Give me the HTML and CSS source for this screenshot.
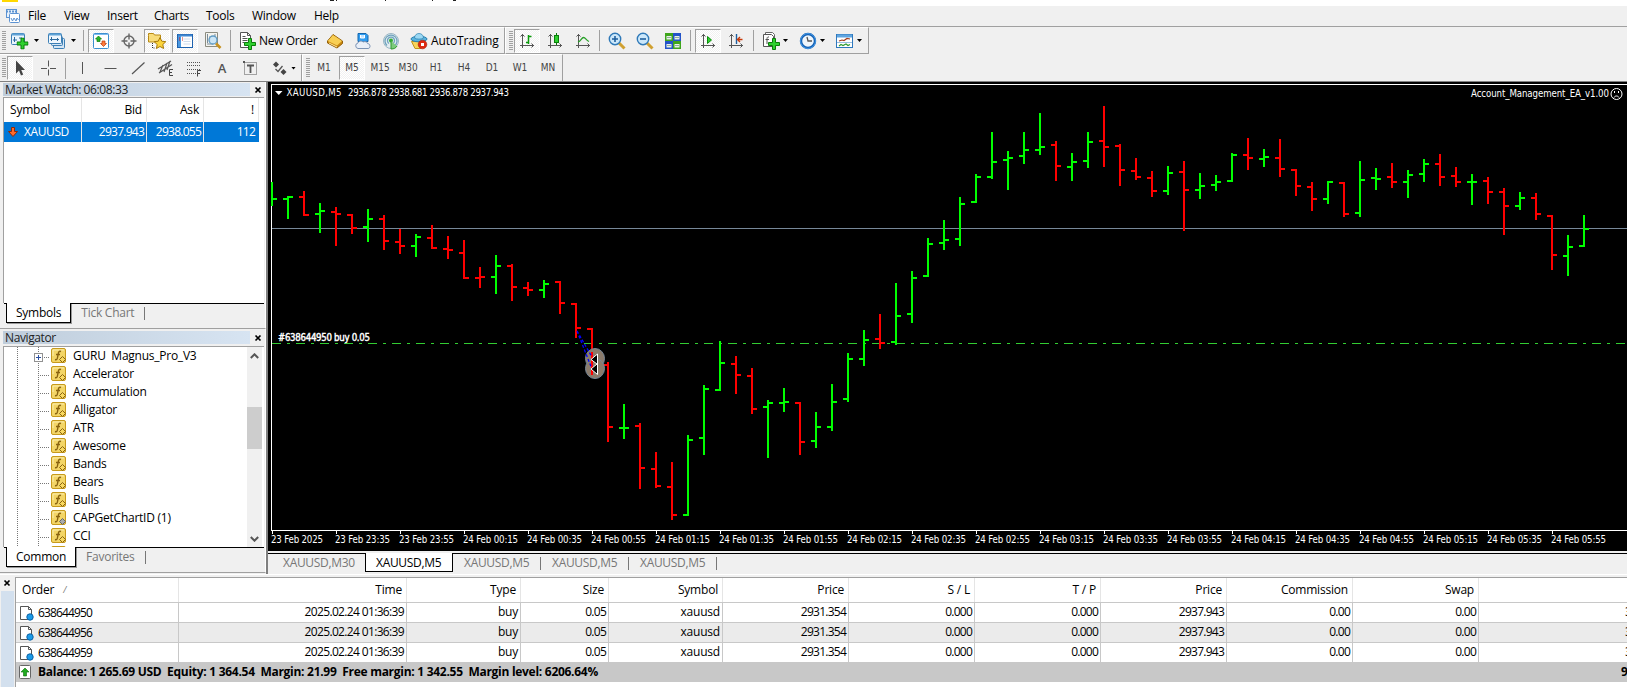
FILE: index.html
```html
<!DOCTYPE html>
<html lang="en">

<head>
  <meta charset="UTF-8" />
  <meta name="viewport" content="width=device-width, initial-scale=1.0" />
  <title>Trading Terminal</title>
  <link rel="stylesheet" href="styles.css">
</head>

<body>
  <svg class="defs" width="0" height="0">
    <symbol id="plus" viewBox="0 0 12 12">
      <path d="M4.5 .5h3v4h4v3h-4v4h-3v-4h-4v-3h4z" fill="#2fd02f" stroke="#0a7d0a" />
    </symbol>
    <symbol id="axes" viewBox="0 0 18 18">
      <path d="M4.500 2v14M2 13.500h14M2.500 4.500l2-2 2 2M13.500 11.500l2 2-2 2" fill="none" stroke="#555" />
    </symbol>
    <symbol id="fx" viewBox="0 0 16 16">
      <rect x=".5" y=".5" width="14" height="14" rx="1.500" fill="#f3d566" stroke="#c79a1c" />
      <path d="M2 8V2h11" fill="none" stroke="#fbeeb0" />
      <path d="M10 3.500c-2-.8-2.500.5-2.800 2.500L6.500 9.500C6.200 11.500 5.500 12 4 11.500M5 6.500h4" fill="none" stroke="#8a6410" stroke-width="1.400" />
    </symbol>
    <symbol id="doc" viewBox="0 0 15 16">
      <path d="M1.500 1.500h8l3 3v10h-11z" fill="#fff" stroke="#555" />
      <path d="M9.500 1.500v3h3" fill="none" stroke="#555" />
      <circle cx="11" cy="12" r="3.200" fill="#1c9be8" stroke="#0d62a5" />
    </symbol>
    <symbol id="cross" viewBox="0 0 8 8">
      <path d="M1.500 1.500l5 5M6.500 1.500l-5 5" stroke="#000" stroke-width="1.700" />
    </symbol>
  </svg>

  <div class="app">
    <div class="titlebar">
      <span class="app-mark"></span>
      <svg class="title-tail" width="140" height="2" viewBox="328 0 140 2">
        <path d="M330 .5h4M336 .5h1M385.500 0v1M432.500 0v1M453 .5h3" stroke="#222" />
      </svg>
    </div>

    <div class="menubar">
      <svg class="menu-logo" width="16" height="15" viewBox="0 0 16 15">
        <rect x="1.500" y=".5" width="10" height="8" fill="#e7f1fb" stroke="#5d93d2" />
        <path d="M1 2.500h11" stroke="#5d93d2" stroke-width="2" stroke-dasharray="2 1" />
        <rect x="4.500" y="4.500" width="10" height="9" rx="1" fill="#fff" stroke="#5d93d2" />
        <path d="M6 9l1.500 3L9 9l2 3 1-3 1.500 2" fill="none" stroke="#5d93d2" />
      </svg>
      <span class="m-file">File</span><span class="m-view">View</span><span class="m-insert">Insert</span><span class="m-charts">Charts</span><span class="m-tools">Tools</span><span class="m-window">Window</span><span class="m-help">Help</span>
    </div>

    <div class="toolbar-row">
      <div class="toolbar">
        <i class="grip"></i>
        <div class="btn drop">
          <svg width="18" height="18" viewBox="0 0 18 18"><rect x=".5" y="1.500" width="13" height="11" rx="1" fill="#e9f4fd" stroke="#3c7fb5" /><path d="M1 2.500h12" stroke="#5fa3d6" stroke-width="2" /><path d="M3.500 5v5M2 8h4M8 6h3" stroke="#2d6b9f" /><use href="#plus" x="5.500" y="5.500" width="12" height="12" /></svg>
          <i class="arrow"></i>
        </div>
        <div class="btn drop">
          <svg width="18" height="18" viewBox="0 0 18 18"><rect x="5.500" y="6.500" width="11" height="10" rx="1" fill="#d5e6f5" stroke="#3c7fb5" /><rect x="3.500" y="4.500" width="11" height="9" rx="1" fill="#d5e6f5" stroke="#3c7fb5" /><rect x=".5" y="1.500" width="13" height="10" rx="1" fill="#eef6fd" stroke="#3c7fb5" /><path d="M1 2.500h12" stroke="#5fa3d6" stroke-width="2" /><path d="M3.500 5v4M2 7.500h9M9.500 6v3" stroke="#2d6b9f" /></svg>
          <i class="arrow"></i>
        </div>
        <i class="sep"></i>
        <div class="btn on">
          <svg width="18" height="18" viewBox="0 0 18 18"><rect x="1.500" y="1.500" width="15" height="15" rx="1" fill="#fff" stroke="#3c8fd0" /><path d="M2 2.500h14" stroke="#7dbcf0" /><path d="M3.500 7l3-3 3 3H8v2.500H5V7z" fill="#28b428" stroke="#0a7d0a" stroke-width=".7" /><path d="M8.500 11.500l3 3 3-3H13V9h-3v2.500z" fill="#ff7a3c" stroke="#b83a0a" stroke-width=".7" /></svg>
        </div>
        <div class="btn">
          <svg width="18" height="18" viewBox="0 0 18 18"><circle cx="9" cy="9" r="5" fill="none" stroke="#666" stroke-width="1.400" /><path d="M9 1.500v6M9 10.500v6M1.500 9h6M10.500 9h6" stroke="#666" stroke-width="1.400" /></svg>
        </div>
        <div class="btn on">
          <svg width="18" height="18" viewBox="0 0 18 18"><path d="M.5 3.500v-2h5l1 1.500h6v7H.5z" fill="#f8dc7a" stroke="#b98a14" /><path d="M4.500 11v5h3" fill="none" stroke="#333" stroke-dasharray="1 1" /><path d="M12 5.500l1.800 3.700 4 .5-3 2.800.8 4-3.600-2-3.600 2 .8-4-3-2.800 4-.5z" fill="#fbd43c" stroke="#a87908" /></svg>
        </div>
        <div class="btn on">
          <svg width="18" height="18" viewBox="0 0 18 18"><rect x="1.500" y="2.500" width="15" height="13" fill="#fff" stroke="#1f62ae" /><path d="M2 3.500h14" stroke="#3f86d0" stroke-width="2" /><rect x="2" y="4" width="3" height="11" fill="#4a98e0" /><path d="M7.500 7h7M7.500 9.500h7M7.500 12h7" stroke="#cfdcec" /><path d="M3 6h1M3 8h1M6 6h1M6 8h1" stroke="#c22" /></svg>
        </div>
        <div class="btn">
          <svg width="18" height="18" viewBox="0 0 18 18"><path d="M1.500.5h12v14h-12z" fill="#f3f3ee" stroke="#8c8c80" /><path d="M3.500 2v9M6 4v6M11 2v4M3 12h6" stroke="#7b8b98" /><circle cx="9" cy="8" r="4" fill="#c7e3f6" fill-opacity=".9" stroke="#5f9bc4" stroke-width="1.300" /><path d="M12 11.500l4.500 4.500" stroke="#c79220" stroke-width="2.600" /></svg>
        </div>
        <i class="sep"></i>
        <div class="btn wide-order">
          <svg width="18" height="18" viewBox="0 0 18 18"><path d="M2.500.5h7l3 3v12h-10z" fill="#fff" stroke="#555" /><path d="M9.500.5v3h3M4.500 4.500h3M4.500 6.500h5M4.500 8.500h5M4.500 10.500h2" fill="none" stroke="#555" /><use href="#plus" x="6" y="6" width="12" height="12" /></svg>
          <span>New Order</span>
        </div>
        <div class="btn">
          <svg width="18" height="18" viewBox="0 0 18 18"><path d="M1.500 9L7 2.500 16.500 9v2.500L11 16 1.500 11z" fill="#c8870f" stroke="#93600a" /><path d="M1.800 9L7 3l9 6-5 4.500z" fill="#f8cf55" /><path d="M3 11l8 4" stroke="#ffe9a0" /></svg>
        </div>
        <div class="btn">
          <svg width="18" height="18" viewBox="0 0 18 18"><path d="M4 1.500h8l2 2v6H4z" fill="#2f9cf0" stroke="#1466ad" /><path d="M6.500 3v3h4V3" fill="#bfe2ff" stroke="#fff" /><path d="M4 16.500a2.800 2.800 0 010-5.500c.8-2 3.500-2.800 5-1 2.500-1 4.500 0 4.500 1.500 3 0 3.500 5 .5 5z" fill="#e9eff8" stroke="#7b93b5" /></svg>
        </div>
        <div class="btn">
          <svg width="18" height="18" viewBox="0 0 18 18"><circle cx="9" cy="9" r="7.500" fill="#e2ecf0" stroke="#9ab6c4" /><path d="M5 13.500a6 6 0 118 0M7 11.500a3.500 3.500 0 114 0" fill="none" stroke="#6fa3bd" stroke-width="1.300" /><circle cx="9" cy="8.500" r="2" fill="#35ad35" /><path d="M9 9v8c3 0 5-1 6-3" fill="#7ccb7c" stroke="#2f9a2f" /></svg>
        </div>
        <div class="btn wide-auto">
          <svg width="18" height="18" viewBox="0 0 18 18"><path d="M1.500 9.500h13L11 16.500H5z" fill="#f7d35a" stroke="#c1931c" /><ellipse cx="9" cy="7" rx="8" ry="2.800" fill="#58b3de" stroke="#2a7fae" /><path d="M4.500 6c0-6 9-6 9 0-2 1.500-7 1.500-9 0z" fill="#9bd8f3" stroke="#2a7fae" stroke-width=".7" /><circle cx="12.500" cy="12.500" r="4.300" fill="#de2910" stroke="#a51a06" stroke-width=".6" /><path d="M11 11h3v3h-3z" fill="#fff" /></svg>
          <span>AutoTrading</span>
        </div>
      </div>

      <div class="toolbar">
        <i class="grip g2"></i>
        <div class="btn on">
          <svg width="18" height="18" viewBox="0 0 18 18"><use href="#axes" width="18" height="18" /><path d="M10.500 3v9M8 10.500h2.500M10.500 4.500h3" stroke="#0a9a0a" stroke-width="1.500" /></svg>
        </div>
        <div class="btn">
          <svg width="18" height="18" viewBox="0 0 18 18"><use href="#axes" width="18" height="18" /><path d="M10.500 1v12" stroke="#0a7d0a" /><rect x="8.500" y="3.500" width="4" height="7" fill="#2fd02f" stroke="#0a7d0a" /></svg>
        </div>
        <div class="btn">
          <svg width="18" height="18" viewBox="0 0 18 18"><use href="#axes" width="18" height="18" /><path d="M4 10c3-1 3.500-4.500 5.500-4.500S12 8 15 9.500" fill="none" stroke="#28a028" stroke-width="1.300" /></svg>
        </div>
        <i class="sep s5"></i>
        <div class="btn">
          <svg width="18" height="18" viewBox="0 0 18 18"><path d="M11 11l5.500 5.500" stroke="#d0a030" stroke-width="3" /><circle cx="7" cy="7" r="5.700" fill="#cbe7fa" stroke="#2f79b8" stroke-width="1.400" /><path d="M4 7h6M7 4v6" stroke="#1e5f9e" stroke-width="1.600" /></svg>
        </div>
        <div class="btn">
          <svg width="18" height="18" viewBox="0 0 18 18"><path d="M11 11l5.500 5.500" stroke="#d0a030" stroke-width="3" /><circle cx="7" cy="7" r="5.700" fill="#cbe7fa" stroke="#2f79b8" stroke-width="1.400" /><path d="M4 7h6" stroke="#1e5f9e" stroke-width="1.600" /></svg>
        </div>
        <div class="btn">
          <svg width="18" height="18" viewBox="0 0 18 18"><path d="M1 1h8v8H1zM9 9h8v8H9z" fill="#3fa51c" /><path d="M9 1h8v8H9zM1 9h8v8H1z" fill="#2353c8" /><path d="M2.500 4h5v3.500h-5zM10.500 4h5v3.500h-5zM2.500 12h5v3.500h-5zM10.500 12h5v3.500h-5z" fill="#e8f0ea" /><path d="M3 5.500h4M11 5.500h4M3 13.500h4M11 13.500h4" stroke="#8fae9a" /></svg>
        </div>
        <i class="sep"></i>
        <div class="btn on">
          <svg width="18" height="18" viewBox="0 0 18 18"><use href="#axes" width="18" height="18" /><path d="M8.500 4.500l4 3.500-4 3.500z" fill="#2fd02f" stroke="#0a8d0a" /></svg>
        </div>
        <div class="btn">
          <svg width="18" height="18" viewBox="0 0 18 18"><use href="#axes" width="18" height="18" /><path d="M9.500 2v10" stroke="#1e5f9e" stroke-width="1.400" /><path d="M10.500 7.500h5M13 5l-2.500 2.500L13 10" fill="none" stroke="#c83808" stroke-width="1.400" /></svg>
        </div>
        <i class="sep"></i>
        <div class="btn drop tight">
          <svg width="18" height="18" viewBox="0 0 18 18"><path d="M3.500 3.500v-3h7l2 2v9" fill="#fff" stroke="#666" /><path d="M1.500 2.500h8l2 2v10h-10z" fill="#fff" stroke="#555" /><path d="M7 5c-2-.5-2 1-2 3v4M3.500 7.500H7" fill="none" stroke="#555" /><use href="#plus" x="6" y="6" width="12" height="12" /></svg>
          <i class="arrow"></i>
        </div>
        <div class="btn drop tight">
          <svg width="18" height="18" viewBox="0 0 18 18"><circle cx="9" cy="9" r="7" fill="#eef5fb" stroke="#1260b5" stroke-width="2.400" /><circle cx="9" cy="9" r="7.500" fill="none" stroke="#4fa3ee" stroke-width=".8" /><path d="M8 5l1 4h4" fill="none" stroke="#555" stroke-width="1.300" /></svg>
          <i class="arrow"></i>
        </div>
        <div class="btn drop tight">
          <svg width="18" height="18" viewBox="0 0 18 18"><rect x=".5" y="2.500" width="16" height="13" fill="#fff" stroke="#2f78bd" /><path d="M1 4h15" stroke="#5fa5e0" stroke-width="3" /><path d="M3 9l3-1 2 .5 3-2 3 .5" fill="none" stroke="#a23a1a" stroke-width="1.200" /><path d="M1 10.500h15" stroke="#9ac0e0" /><path d="M3 14l2-1.500 2 1 3-1.500 2 1.500 2-1" fill="none" stroke="#2e9a2e" stroke-width="1.200" /></svg>
          <i class="arrow"></i>
        </div>
      </div>
    </div>

    <div class="toolbar-row second">
      <div class="toolbar">
        <i class="grip"></i>
        <div class="btn on">
          <svg width="18" height="18" viewBox="0 0 18 18"><path d="M5 1.500v13l3-3 2 5 2.200-1-2-4.500H14z" fill="#444" /></svg>
        </div>
        <div class="btn">
          <svg width="18" height="18" viewBox="0 0 18 18"><path d="M9.500 1.500v6M9.500 10.500v6M2 9.500h6M11 9.500h6" stroke="#555" /></svg>
        </div>
        <i class="sep s6"></i>
        <div class="btn">
          <svg width="18" height="18" viewBox="0 0 18 18"><path d="M9.500 3v12" stroke="#555" /></svg>
        </div>
        <div class="btn">
          <svg width="18" height="18" viewBox="0 0 18 18"><path d="M3.500 9.500h12" stroke="#555" /></svg>
        </div>
        <div class="btn">
          <svg width="18" height="18" viewBox="0 0 18 18"><path d="M3 15L15.500 3.500" stroke="#555" stroke-width="1.200" /></svg>
        </div>
        <div class="btn">
          <svg width="18" height="18" viewBox="0 0 18 18"><path d="M1 10L14 2M2 14l13-8.500M3 13l3-7M7 13l3-9M10 11l3-9" stroke="#555" stroke-width="1.200" /><path d="M16 10.500h-3.500v6H16M12.500 13.500H15" fill="none" stroke="#444" /></svg>
        </div>
        <div class="btn">
          <svg width="18" height="18" viewBox="0 0 18 18"><path d="M2 3.500h14M2 6.500h14M2 10.500h14M2 14.500h9" stroke="#555" stroke-dasharray="1 1" /><path d="M16 11.500h-3.500v6M12.500 14.500H15" fill="none" stroke="#444" /></svg>
        </div>
        <div class="btn letter">A</div>
        <div class="btn">
          <svg width="18" height="18" viewBox="0 0 18 18"><rect x="3.500" y="3.500" width="12" height="12" fill="none" stroke="#555" stroke-dasharray="1 1" /><path d="M2 2h2v2H2z" fill="#555" /><path d="M6 6.500h7M9.500 6v8" stroke="#555" stroke-width="1.800" /></svg>
        </div>
        <div class="btn drop obj">
          <svg width="18" height="18" viewBox="0 0 18 18"><path d="M5 2.500l3 3-3 3-3-3z" fill="#444" /><path d="M4.500 10l2.500 2.500L11.500 7" fill="none" stroke="#555" stroke-width="1.300" /><path d="M12.500 10l3 3-3 3-3-3z" fill="#444" /></svg>
          <i class="arrow"></i>
        </div>
      </div>

      <div class="toolbar periods">
        <i class="grip g2"></i>
        <div class="btn">M1</div>
        <div class="btn on">M5</div>
        <div class="btn">M15</div>
        <div class="btn">M30</div>
        <div class="btn">H1</div>
        <div class="btn">H4</div>
        <div class="btn">D1</div>
        <div class="btn">W1</div>
        <div class="btn">MN</div>
      </div>
    </div>

    <div class="main">
      <div class="dock">
        <div class="panel watch">
          <div class="panel-title">
            <span class="caption">Market Watch: 06:08:33</span>
            <svg width="8" height="8"><use href="#cross" /></svg>
          </div>
          <div class="panel-body">
            <div class="quotes head">
              <span>Symbol</span><span>Bid</span><span>Ask</span><span>!</span>
            </div>
            <div class="quotes selected">
              <span class="sym"><svg width="10" height="10" viewBox="0 0 10 10"><path d="M3.500 .5h3v4h3L5 9.500.5 4.500h3z" fill="#ff6a2a" stroke="#8c2a08" /></svg>XAUUSD</span><span>2937.943</span><span>2938.055</span><span>112</span>
            </div>
          </div>
          <div class="tabs">
            <span class="tab active">Symbols</span><span class="tab">Tick Chart</span>
          </div>
        </div>

        <div class="panel navigator">
          <div class="panel-title">
            <span class="caption">Navigator</span>
            <svg width="8" height="8"><use href="#cross" /></svg>
          </div>
          <div class="panel-body tree-wrap">
            <ul class="tree" id="tree"></ul>
            <div class="scrollbar">
              <svg width="9" height="6" viewBox="0 0 9 6"><path d="M.8 5l3.700-3.700L8.200 5" fill="none" stroke="#555" stroke-width="2" /></svg>
              <i class="thumb"></i>
              <svg width="9" height="6" viewBox="0 0 9 6"><path d="M.8 1l3.700 3.700L8.200 1" fill="none" stroke="#555" stroke-width="2" /></svg>
            </div>
          </div>
          <div class="tabs">
            <span class="tab active">Common</span><span class="tab">Favorites</span>
          </div>
        </div>
      </div>

      <div class="workspace">
        <svg class="chart" id="chart" width="1359" height="469" viewBox="268 82 1359 469">
          <path class="frame" d="M1627 84.500H271.500V530.500H1627" />
          <path class="bid" d="M272 228.500H1627" />
          <path class="order" d="M272 343.500H1627" />
          <g id="bars"></g>
          <g id="dates"></g>
          <g class="marker">
            <ellipse cx="595" cy="358.500" rx="9.500" ry="10" />
            <ellipse cx="595" cy="368.500" rx="9.500" ry="10" />
            <path class="down" d="M592 352v23" />
            <path class="trail" d="M577 331L592 357M577 331L592 369" />
            <path class="arrows" d="M597.500 354v20.500L591 369l6-5-6-4.500z" />
          </g>
          <path d="M275 91h7.500l-3.750 4z" fill="#fff" />
          <text x="286.500" y="96" textLength="55">XAUUSD,M5</text>
          <text x="348" y="96" textLength="161">2936.878 2938.681 2936.878 2937.943</text>
          <text class="label" x="278" y="341" textLength="92">#638644950 buy 0.05</text>
          <text x="1471" y="97" textLength="138">Account_Management_EA_v1.00</text>
          <g fill="none" stroke="#fff">
            <circle cx="1616.500" cy="94" r="5.500" />
            <path d="M1614 97.500c1-2 4-2 5 0M1614.500 91v2M1618.500 91v2" />
          </g>
        </svg>
        <div class="chart-tabs">
          <span>XAUUSD,M30</span><span class="active">XAUUSD,M5</span><span>XAUUSD,M5</span><span>XAUUSD,M5</span><span>XAUUSD,M5</span>
        </div>
      </div>
    </div>

    <div class="terminal">
      <div class="side">
        <svg width="8" height="8"><use href="#cross" /></svg>
        <i class="side-strip"></i>
      </div>
      <div class="orders" id="orders">
        <div class="row header">
          <span>Order <em>/</em></span><span>Time</span><span>Type</span><span>Size</span><span>Symbol</span><span>Price</span><span>S / L</span><span>T / P</span><span>Price</span><span>Commission</span><span>Swap</span><span></span>
        </div>
        <div class="row">
          <span><svg width="15" height="16"><use href="#doc" /></svg>638644950</span><span class="time">2025.02.24 01:36:39</span><span class="word">buy</span><span>0.05</span><span class="word">xauusd</span><span>2931.354</span><span>0.000</span><span>0.000</span><span>2937.943</span><span>0.00</span><span>0.00</span><span>3</span>
        </div>
        <div class="row alt">
          <span><svg width="15" height="16"><use href="#doc" /></svg>638644956</span><span class="time">2025.02.24 01:36:39</span><span class="word">buy</span><span>0.05</span><span class="word">xauusd</span><span>2931.354</span><span>0.000</span><span>0.000</span><span>2937.943</span><span>0.00</span><span>0.00</span><span>3</span>
        </div>
        <div class="row last">
          <span><svg width="15" height="16"><use href="#doc" /></svg>638644959</span><span class="time">2025.02.24 01:36:39</span><span class="word">buy</span><span>0.05</span><span class="word">xauusd</span><span>2931.354</span><span>0.000</span><span>0.000</span><span>2937.943</span><span>0.00</span><span>0.00</span><span>3</span>
        </div>
        <div class="summary">
          <svg width="13" height="14" viewBox="0 0 13 14"><rect x=".5" y=".5" width="11" height="13" rx="1" fill="#fff" stroke="#666" /><path d="M6 3l4 4H7.500v4h-3V7H2z" fill="#1faa1f" stroke="#0a6d0a" stroke-width=".6" /></svg>
          <span class="balance">Balance: 1 265.69 USD  Equity: 1 364.54  Margin: 21.99  Free margin: 1 342.55  Margin level: 6206.64%</span>
          <span class="profit">9</span>
        </div>
      </div>
    </div>
  </div>

  <script>
    const SVG = "http://www.w3.org/2000/svg";

    // navigator tree
    const indicators = ["GURU  Magnus_Pro_V3", "Accelerator", "Accumulation", "Alligator", "ATR", "Awesome",
      "Bands", "Bears", "Bulls", "CAPGetChartID (1)", "CCI", ""];
    const tree = document.getElementById("tree");

    indicators.forEach((name, index) => {
      const li = document.createElement("li");
      const badge = name.startsWith("CAP") ? "#aaa" : "#f8d860";
      const edge = name.startsWith("CAP") ? "#666" : "#8a6410";
      li.innerHTML = `
        <i class="stem"></i>
        <i class="branch">${index === 0 ? '<svg class="expand" width="9" height="9" viewBox="0 0 9 9"><rect x=".5" y=".5" width="8" height="8" fill="#fff" stroke="#919191"/><path d="M2 4.500h5M4.500 2v5" stroke="#2a4fa0"/></svg>' : ""}</i>
        <svg class="fx" width="16" height="16" viewBox="0 0 16 16"><use href="#fx" width="16" height="16"/><path d="M11.500 8.500l3 3-3 3-3-3z" fill="${badge}" stroke="${edge}"/></svg>
        <span>${name}</span>`;
      tree.appendChild(li);
    });

    // [high, low, open, close, up]
    const bars = [
      [182, 206, 199, 199, 1], [196, 219, 199, 197, 1], [191, 216, 197, 215, 0], [203, 233, 214, 211, 1],
      [207, 246, 212, 214, 0], [214, 234, 215, 228, 0], [209, 242, 227, 219, 1], [215, 250, 219, 241, 0],
      [229, 254, 242, 246, 0], [234, 257, 246, 237, 1], [225, 249, 238, 248, 0], [236, 259, 249, 250, 0],
      [240, 279, 253, 278, 0], [267, 288, 278, 277, 0], [255, 294, 277, 266, 1], [264, 301, 266, 287, 0],
      [282, 296, 288, 290, 0], [280, 298, 290, 284, 1], [281, 314, 282, 303, 0], [303, 338, 304, 328, 0],
      [328, 375, 329, 365, 0], [362, 442, 365, 427, 0], [404, 439, 428, 428, 1], [423, 489, 426, 468, 0],
      [452, 488, 469, 486, 0], [462, 520, 487, 515, 0], [435, 516, 515, 440, 1], [385, 455, 438, 389, 1],
      [341, 391, 390, 363, 1], [356, 394, 364, 375, 0], [368, 414, 376, 409, 0], [400, 458, 407, 403, 1],
      [388, 412, 403, 402, 1], [402, 455, 403, 442, 0], [412, 448, 441, 427, 1], [384, 431, 427, 402, 1],
      [353, 402, 399, 359, 1], [330, 366, 359, 340, 1], [314, 349, 339, 343, 0], [283, 345, 342, 316, 1],
      [271, 323, 314, 278, 1], [238, 277, 276, 244, 1], [220, 250, 243, 240, 1], [197, 246, 239, 204, 1],
      [174, 203, 202, 177, 1], [132, 179, 177, 162, 1], [151, 190, 160, 158, 1], [132, 164, 156, 150, 1],
      [113, 155, 150, 147, 1], [141, 181, 145, 166, 0], [153, 181, 167, 162, 1], [132, 168, 161, 142, 1],
      [106, 167, 141, 147, 0], [144, 186, 146, 170, 0], [158, 180, 171, 177, 0], [171, 197, 178, 191, 0],
      [166, 195, 191, 173, 1], [161, 231, 172, 190, 0], [173, 199, 190, 186, 1], [175, 191, 185, 182, 1],
      [153, 182, 181, 155, 1], [138, 170, 155, 158, 0], [149, 167, 159, 157, 1], [139, 177, 158, 169, 0],
      [169, 196, 170, 186, 0], [182, 211, 187, 199, 0], [181, 204, 199, 182, 1], [182, 217, 183, 214, 0],
      [161, 217, 213, 180, 1], [168, 190, 178, 179, 1], [163, 188, 177, 182, 0], [170, 198, 182, 175, 1],
      [159, 182, 174, 164, 1], [154, 186, 164, 177, 0], [167, 187, 176, 182, 0], [174, 205, 182, 182, 1],
      [177, 204, 181, 192, 0], [188, 235, 192, 206, 0], [192, 210, 206, 198, 1], [193, 220, 198, 214, 0],
      [215, 270, 216, 255, 0], [235, 276, 256, 247, 1], [215, 247, 246, 229, 1]
    ];
    const barGroup = document.getElementById("bars");

    bars.forEach(([high, low, open, close, up], index) => {
      const x = 272 + index * 16;
      const path = document.createElementNS(SVG, "path");
      const left = index === 0 ? "" : `M${x - 5} ${open}H${x}`;
      path.setAttribute("d", `M${x} ${high}V${low}${left}M${x} ${close}H${x + 5}`);
      path.setAttribute("class", up ? "up" : "dn");
      barGroup.appendChild(path);
    });

    // time scale
    const dates = ["23 Feb 2025", "23 Feb 23:35", "23 Feb 23:55", "24 Feb 00:15", "24 Feb 00:35", "24 Feb 00:55",
      "24 Feb 01:15", "24 Feb 01:35", "24 Feb 01:55", "24 Feb 02:15", "24 Feb 02:35", "24 Feb 02:55", "24 Feb 03:15",
      "24 Feb 03:35", "24 Feb 03:55", "24 Feb 04:15", "24 Feb 04:35", "24 Feb 04:55", "24 Feb 05:15", "24 Feb 05:35",
      "24 Feb 05:55"];
    const dateGroup = document.getElementById("dates");

    dates.forEach((label, index) => {
      const x = 272 + index * 64;
      const tick = document.createElementNS(SVG, "path");
      tick.setAttribute("d", `M${x + 0.5} 531v3`);
      tick.setAttribute("class", "frame");
      const text = document.createElementNS(SVG, "text");
      text.setAttribute("x", x - 1);
      text.setAttribute("y", 543);
      text.setAttribute("textLength", index === 0 ? 52 : 55);
      text.textContent = label;
      dateGroup.append(tick, text);
    });
  </script>
</body>

</html>
```
FILE: styles.css
```css
* {
  margin: 0;
  padding: 0;
  box-sizing: border-box;
}

body {
  font-family: "Open Sans", "Noto Sans", sans-serif;
  font-size: 12px;
  line-height: 16px;
  color: #000;
  background: #f0f0f0;
  overflow: hidden;
}

.defs {
  position: absolute;
}

i {
  display: block;
  flex: none;
}

svg {
  flex: none;
}

.app {
  width: 1627px;
  height: 687px;
  display: flex;
  flex-direction: column;
  overflow: hidden;
}

.titlebar {
  height: 6px;
  flex: none;
  display: flex;
  align-items: flex-start;
  gap: 310px;
  padding-left: 2px;
  background: #fff;
}

.app-mark {
  width: 16px;
  height: 2px;
  background: #ffd800;
}

.menubar {
  height: 20px;
  flex: none;
  display: flex;
  align-items: center;
  padding-left: 5px;
  letter-spacing: -0.25px;
}

.menu-logo {
  margin-right: 7px;
}

.m-file {
  width: 36px;
}

.m-view {
  width: 43px;
}

.m-insert {
  width: 47px;
}

.m-charts {
  width: 52px;
}

.m-tools {
  width: 46px;
}

.m-window {
  width: 62px;
}

/* toolbars */
.toolbar-row {
  height: 28px;
  flex: none;
  display: flex;
  border-top: 1px solid #a0a0a0;
}

.toolbar-row.second {
  height: 27px;
  border-top: none;
}

.toolbar {
  display: flex;
  align-items: center;
  padding-left: 2px;
  border-top: 1px solid #fff;
  border-right: 1px solid #a0a0a0;
  border-bottom: 1px solid #a0a0a0;
}

.toolbar + .toolbar {
  border-left: 1px solid #fff;
}

.second .toolbar {
  border-bottom: none;
}

.grip {
  width: 4px;
  height: 20px;
  background: repeating-linear-gradient(#a0a0a0 0 1px, #f0f0f0 1px 2px);
}

.grip.g2 {
  margin-left: 1px;
}

.btn {
  width: 26px;
  height: 24px;
  margin: 0 1px;
  flex: none;
  display: flex;
  align-items: center;
  justify-content: center;
  border: 1px solid transparent;
}

.btn.on {
  border-color: #a0a0a0 #fff #fff #a0a0a0;
  background: repeating-conic-gradient(#fff 0 25%, #f1f1f1 0 50%) 0 0 / 2px 2px;
}

.btn.drop {
  width: 35px;
  justify-content: flex-start;
  padding-left: 3px;
  gap: 5px;
}

.btn.tight {
  gap: 3px;
}

.btn.obj {
  padding-left: 5px;
  gap: 2px;
}

.arrow {
  width: 5px;
  height: 3px;
  background: #000;
  clip-path: polygon(0 0, 100% 0, 50% 100%);
}

.btn.letter {
  font-size: 13px;
  font-weight: 600;
  color: #555;
}

.wide-order,
.wide-auto {
  justify-content: flex-start;
  gap: 3px;
  white-space: nowrap;
}

.wide-order {
  width: 85px;
  padding-left: 2px;
  letter-spacing: -0.35px;
}

.wide-auto {
  width: 97px;
  padding-left: 3px;
  letter-spacing: -0.1px;
}

.sep {
  width: 1px;
  height: 21px;
  margin: 0 3px;
  background: #a0a0a0;
}

.sep.s5 {
  margin: 0 3px 0 2px;
}

.sep.s6 {
  margin: 0 2px 0 3px;
}

.periods .btn {
  font-family: "DejaVu Sans", "DejaVu Sans Condensed", sans-serif;
  font-stretch: condensed;
  font-size: 10px;
  color: #444;
}

/* docked panels */
.main {
  height: 493px;
  flex: none;
  display: flex;
  border-top: 1px solid #808080;
}

.dock {
  width: 268px;
  flex: none;
  display: flex;
  flex-direction: column;
  border-right: 2px solid #808080;
}

.panel {
  display: flex;
  flex-direction: column;
  padding-left: 3px;
  border-right: 1px solid #fff;
  border-bottom: 1px solid #a0a0a0;
}

.watch {
  height: 247px;
}

.navigator {
  height: 244px;
}

.panel-title {
  height: 15px;
  flex: none;
  display: flex;
  align-items: center;
}

.navigator .panel-title {
  margin: 1px 0;
}

.caption {
  width: 247px;
  height: 13px;
  margin-right: 4px;
  padding-left: 2px;
  line-height: 13px;
  letter-spacing: -0.4px;
  color: #222;
  background: linear-gradient(90deg, #bfcddb, #d7e4f2);
}

.panel-body {
  width: 261px;
  flex: 1;
  min-height: 0;
  overflow: hidden;
  background: #fff;
  border-top: 1px solid #a0a0a0;
  border-left: 1px solid #a0a0a0;
}

.quotes {
  width: 255px;
  height: 20px;
  display: grid;
  grid-template-columns: 78px 65px 57px 55px;
  line-height: 20px;
  text-align: right;
}

.quotes span {
  padding-right: 2px;
  border-right: 1px solid #e5e5e5;
}

.quotes span:first-child {
  text-align: left;
}

.quotes.head {
  height: 24px;
  line-height: 24px;
  letter-spacing: -0.2px;
}

.quotes.head span {
  padding: 0 4px 0 6px;
}

.quotes.selected {
  color: #fff;
  background: #0078d7;
  letter-spacing: -0.75px;
}

.quotes.selected span:last-child {
  padding-right: 4px;
  border-right: none;
}

.quotes .sym {
  display: flex;
  align-items: center;
  gap: 6px;
  padding-left: 4px;
  letter-spacing: -0.4px;
}

.tabs {
  width: 260px;
  height: 25px;
  flex: none;
  display: flex;
  margin-left: 1px;
  padding-left: 2px;
  border-top: 1px solid #000;
  color: #777;
  letter-spacing: -0.25px;
}

.tab {
  height: 13px;
  margin: 3px 0 0 10px;
  padding-right: 10px;
  line-height: 12px;
  border-right: 1px solid #777;
}

.tab.active {
  height: 20px;
  margin: -1px 0 0;
  padding: 0 9px;
  line-height: 19px;
  color: #000;
  background: #fff;
  border: 1px solid #000;
  border-top: none;
  box-shadow: 1px 1px #999;
}

.tree-wrap {
  display: flex;
}

.tree {
  width: 243px;
  list-style: none;
  white-space: pre;
  overflow: hidden;
}

.tree li {
  height: 18px;
  display: flex;
  align-items: center;
  padding-left: 13px;
  line-height: 18px;
  letter-spacing: -0.25px;
}

.stem {
  width: 21px;
  height: 18px;
  background: repeating-linear-gradient(#777 0 1px, #fff 1px 2px) 0 0 / 1px 100% no-repeat;
}

.branch {
  width: 12px;
  height: 18px;
  background:
    repeating-linear-gradient(#777 0 1px, #fff 1px 2px) 0 0 / 1px 100% no-repeat,
    repeating-linear-gradient(90deg, #777 0 1px, #fff 1px 2px) 0 10px / 100% 1px no-repeat;
}

.expand {
  display: block;
  margin: 6px 0 0 -4px;
}

.tree .fx {
  margin: 0 6px 0 1px;
}

.scrollbar {
  width: 15px;
  display: flex;
  flex-direction: column;
  align-items: center;
  padding: 6px 0 5px;
  background: #f0f0f0;
}

.thumb {
  width: 15px;
  height: 42px;
  margin: 48px 0 auto;
  background: #cdcdcd;
}

/* chart */
.workspace {
  flex: 1;
  min-width: 0;
  display: flex;
  flex-direction: column;
}

.chart {
  display: block;
  background: #000;
}

.chart text {
  font-family: "DejaVu Sans", "DejaVu Sans Condensed", sans-serif;
  font-stretch: condensed;
  font-size: 9.6px;
  fill: #fff;
}

.chart .label {
  stroke: #fff;
  stroke-width: 0.4px;
}

.frame,
.bid,
.order,
.up,
.dn {
  fill: none;
  shape-rendering: crispEdges;
}

.frame {
  stroke: #fff;
}

.bid {
  stroke: #778899;
}

.order {
  stroke: #32cd32;
  stroke-dasharray: 9 6 3 6;
}

.up {
  stroke: #00ff00;
  stroke-width: 2;
}

.dn {
  stroke: #ff0000;
  stroke-width: 2;
}

.marker ellipse {
  fill: #8b7b6b;
  stroke: #778899;
}

.marker .down {
  stroke: #ff0000;
  stroke-width: 2;
}

.marker .trail {
  fill: none;
  stroke: #0000ff;
  stroke-width: 1.3;
  stroke-dasharray: 3 2;
}

.marker .arrows {
  fill: #000;
  stroke: #fff;
}

.chart-tabs {
  height: 22px;
  flex: none;
  display: flex;
  margin-top: 2px;
  border-top: 1px solid #000;
  color: #777;
  letter-spacing: -0.3px;
}

.chart-tabs span {
  width: 88px;
  height: 13px;
  margin-top: 3px;
  padding-left: 11px;
  line-height: 12px;
  border-right: 1px solid #777;
}

.chart-tabs span:first-child {
  width: 97px;
  padding-left: 15px;
  border-right: none;
}

.chart-tabs .active {
  height: 19px;
  margin-top: -1px;
  padding-left: 10px;
  line-height: 20px;
  color: #000;
  background: #fff;
  border: 1px solid #000;
  border-top: none;
}

/* terminal */
.terminal {
  flex: 1;
  display: flex;
  padding-top: 2px;
  border-top: 1px solid #fff;
}

.side {
  width: 15px;
  flex: none;
  display: flex;
  flex-direction: column;
  padding: 2px 0 0 1px;
}

.side svg {
  margin: 0 0 4px 2px;
}

.side-strip {
  width: 13px;
  flex: 1;
  background: #d3e0ee;
}

.orders {
  flex: 1;
  min-width: 0;
  background: #fff;
  border-top: 1px solid #a0a0a0;
  border-left: 1px solid #a0a0a0;
}

.row {
  width: 1611px;
  height: 20px;
  display: grid;
  grid-template-columns: 163px 228px 114px 88px 114px 126px 126px 126px 126px 126px 126px 1fr;
  line-height: 17px;
  text-align: right;
  letter-spacing: -0.75px;
  border-bottom: 1px solid #c8c8c8;
  overflow: hidden;
}

.row span {
  padding-right: 2px;
  border-right: 1px solid #c8c8c8;
}

.row .word {
  letter-spacing: -0.2px;
}

.row .time {
  letter-spacing: -0.65px;
}

.row span:first-child {
  display: flex;
  align-items: center;
  gap: 4px;
  padding-left: 3px;
  letter-spacing: -0.85px;
}

.row span:last-child {
  padding-left: 146px;
  text-align: left;
  border-right: none;
}

.row.header {
  height: 25px;
  line-height: 24px;
  letter-spacing: -0.2px;
}

.row.header span {
  padding-right: 4px;
  border-right-color: #e5e5e5;
}

.row.header span:first-child {
  padding-left: 6px;
  letter-spacing: -0.2px;
}

.row.header em {
  margin-left: 5px;
  font-size: 9px;
  color: #777;
}

.row.alt {
  background: #ebebeb;
}

.row.last {
  height: 19px;
  border-bottom: none;
}

.summary {
  height: 20px;
  display: flex;
  align-items: center;
  padding-left: 3px;
  font-weight: 700;
  white-space: pre;
  letter-spacing: -0.28px;
  background: #c8c8c8;
}

.balance {
  margin-left: 6px;
}

.profit {
  width: 6px;
  margin-left: auto;
  overflow: hidden;
}
```
